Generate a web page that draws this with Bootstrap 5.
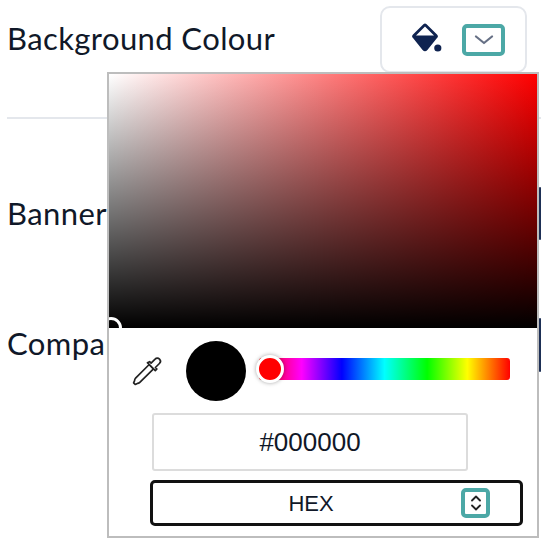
<!DOCTYPE html>
<html lang="en">
<head>
  <meta charset="UTF-8" />
  <title>Background Colour</title>
  <link href="https://cdn.jsdelivr.net/npm/bootstrap@5.3.3/dist/css/bootstrap.min.css" rel="stylesheet">
  <style>
    html, body { height: 100%; overflow: hidden; }
    body { background: #fff; color: #101828; }
    .page-wrap { position: relative; height: 546px; padding: 6px 2px 0 7px; }
    .row-label { font-family: Lato, sans-serif; font-size: 31px; letter-spacing: .4px; line-height: 36px; }
    .first-row { height: 67px; padding-right: 14px; }
    .first-label { margin-top: 14px; }
    .swatch-box { width: 147px; height: 67px; border: 2px solid #e4e7ec; border-radius: 10px; padding: 16px 20px 0 30px; gap: 18px; }
    .bucket-icon { margin-top: -1px; }
    .teal-btn { width: 44px; height: 32px; border: 4px solid #4ca8a6; border-radius: 5px; background: #fff; padding: 0; }
    .divider { border-top: 2px solid #e4e7ec; margin: 44px 0 0; opacity: 1; }
    .banner-row { margin-top: 68px; height: 53px; }
    .company-row { margin-top: 78px; height: 54px; }
    .banner-row .row-label { margin-top: -2px; }
    .company-row .row-label { margin-top: -4px; }
    .dark-edge { width: 2px; height: 100%; background: #1d2f55; border-radius: 2px; }
    .picker { position: absolute; left: 107px; top: 72px; width: 432px; height: 466px; background: #fff; border: 2px solid #bdbdbd; }
    .sat-area { position: relative; height: 254px; overflow: hidden;
      background: linear-gradient(to top, #000, transparent), linear-gradient(to right, #fff, #f00); }
    .sat-dot { position: absolute; left: -9px; top: 243px; width: 22px; height: 22px; border: 3px solid #fff; border-radius: 50%; }
    .tools-row { padding: 13px 27px 0 22px; height: 85px; }
    .dropper-icon { width: 32px; height: 32px; margin-top: 14px; }
    .colour-dot { width: 60px; height: 60px; background: #000; border-radius: 50%; margin-left: 23px; }
    .hue-track { position: relative; flex: 1; height: 22px; margin: 17px 0 0 13px; border-radius: 3px;
      background: linear-gradient(to right, #f00 0%, #f0f 17%, #00f 33%, #0ff 50%, #0f0 67%, #ff0 83%, #f00 100%); }
    .hue-thumb { position: absolute; left: -3px; top: -3px; width: 28px; height: 28px; background: #f00; border: 3px solid #fff; border-radius: 50%; box-shadow: 0 0 4px rgba(0,0,0,.35); }
    .hex-input.form-control { display: block; width: 316px; height: 58px; margin-left: 43px; border: 2px solid #dcdcdc; border-radius: 3px; color: #101828; font-family: "Liberation Sans", sans-serif; font-size: 26px; text-align: center; padding: 0; }
    .mode-select { position: relative; width: 373px; height: 46px; margin: 9px 0 0 41px; border: 3px solid #111; border-radius: 5px; font-family: "Liberation Sans", sans-serif; font-size: 22px; color: #101828; }
    .mode-label { width: 316px; }
    .mode-arrows { position: absolute; right: 30px; top: 5px; width: 29px; height: 30px; border: 4px solid #4ca8a6; border-radius: 5px; background: #fff; padding: 0; }
  </style>
</head>
<body>
  <div class="page-wrap">
    <div class="first-row d-flex justify-content-between align-items-start">
      <span class="row-label first-label">Background Colour</span>
      <div class="swatch-box d-flex align-items-start bg-white">
        <svg class="bucket-icon flex-shrink-0" width="32" height="30" viewBox="0 0 32 30">
          <path fill="#0f2350" fill-rule="evenodd" d="M11.4 1.2a2.4 2.4 0 0 1 3.2 0L25 11.4a2.6 2.6 0 0 1 0 3.7L15.4 27a3.4 3.4 0 0 1-4.8 0L1 15.1a2.6 2.6 0 0 1 0-3.7zM13 3.6 4 12.6h18z"/>
          <circle cx="25.8" cy="25" r="3.6" fill="#0f2350"/>
        </svg>
        <button class="teal-btn d-flex align-items-center justify-content-center" type="button" aria-label="Open">
          <svg width="20" height="10" viewBox="0 0 20 10"><path d="M2 1.5 10 8l8-6.5" fill="none" stroke="#667085" stroke-width="2.2" stroke-linecap="round" stroke-linejoin="round"/></svg>
        </button>
      </div>
    </div>
    <hr class="divider">
    <div class="banner-row d-flex justify-content-between align-items-center">
      <span class="row-label">Banner</span>
      <span class="dark-edge"></span>
    </div>
    <div class="company-row d-flex justify-content-between align-items-center">
      <span class="row-label">Company</span>
      <span class="dark-edge"></span>
    </div>

    <div class="picker">
      <div class="sat-area"><span class="sat-dot"></span></div>
      <div class="tools-row d-flex align-items-start">
        <svg class="dropper-icon flex-shrink-0" viewBox="0 0 32 32">
          <path d="M18.2 9.5 4.6 23.2c-.7.7-1 1.6-1 2.4l-1 2.2 1.6 1.6 2.2-1c.9 0 1.7-.3 2.4-1l13.7-13.6z" fill="#fff" stroke="#222" stroke-width="1.7" stroke-linejoin="round"/>
          <path d="M16.4 7.7l7.9 7.9 1.6-1.6-1.5-1.5 4-4c1.3-1.3 1.3-3.2.1-4.4s-3.2-1.2-4.4.1l-4 4-1.5-1.5z" fill="#fff" stroke="#222" stroke-width="1.7" stroke-linejoin="round"/>
        </svg>
        <span class="colour-dot flex-shrink-0"></span>
        <div class="hue-track"><span class="hue-thumb"></span></div>
      </div>
      <input class="hex-input form-control" type="text" value="#000000">
      <div class="mode-select d-flex align-items-center">
        <span class="mode-label text-center">HEX</span>
        <button class="mode-arrows d-flex align-items-center justify-content-center" type="button" aria-label="Switch">
          <svg width="12" height="18" viewBox="0 0 12 18"><path d="M2 6.5 6 2.5l4 4M2 11.5l4 4 4-4" fill="none" stroke="#222" stroke-width="1.8" stroke-linecap="round" stroke-linejoin="round"/></svg>
        </button>
      </div>
    </div>
  </div>
  <script src="https://cdn.jsdelivr.net/npm/bootstrap@5.3.3/dist/js/bootstrap.bundle.min.js"></script>
</body>
</html>
